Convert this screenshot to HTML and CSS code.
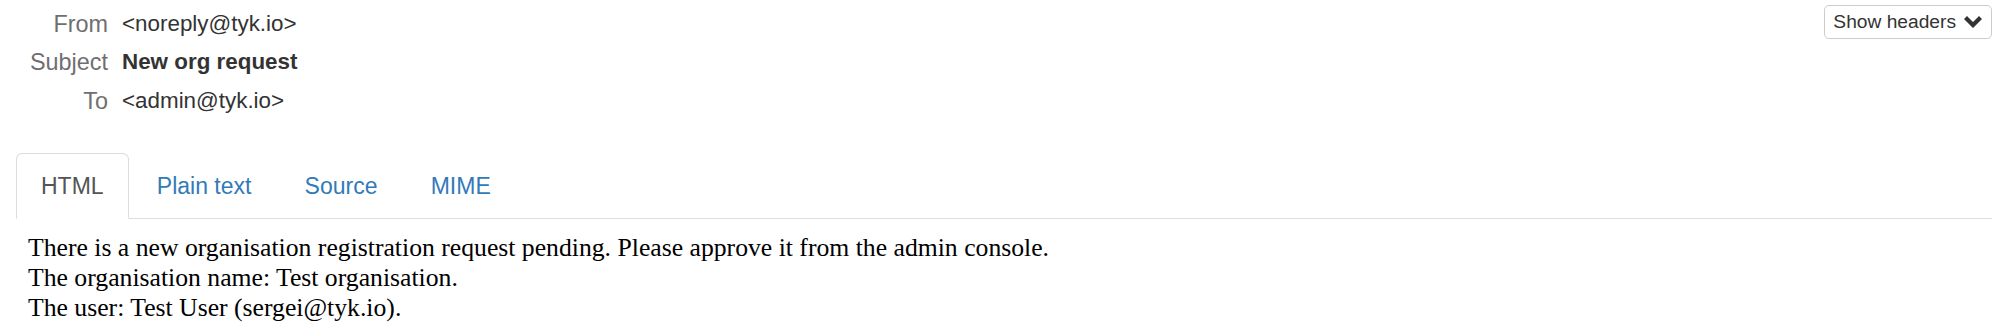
FILE: index.html
```html
<!DOCTYPE html>
<html>
<head>
<meta charset="utf-8">
<title>Message</title>
<link rel="stylesheet" href="styles.css">
</head>
<body>
<div class="message">
  <div class="header">
    <div class="meta">
      <div class="label">From</div>
      <div class="value">&lt;noreply@tyk.io&gt;</div>
      <div class="label">Subject</div>
      <div class="value subject">New org request</div>
      <div class="label">To</div>
      <div class="value">&lt;admin@tyk.io&gt;</div>
    </div>
    <button class="btn" type="button"><span>Show headers</span><svg class="chev" viewBox="0 0 18 12" width="18" height="12" aria-hidden="true"><path d="M0 3 L3 0 L9 6 L15 0 L18 3 L9 12 Z" fill="#333"/></svg></button>
  </div>
  <ul class="tabs">
    <li class="tab active"><a>HTML</a></li>
    <li class="tab"><a>Plain text</a></li>
    <li class="tab"><a>Source</a></li>
    <li class="tab"><a>MIME</a></li>
  </ul>
  <div class="body">
    There is a new organisation registration request pending. Please approve it from the admin console.<br>
    The organisation name: Test organisation.<br>
    The user: Test User (sergei@tyk.io).
  </div>
</div>
</body>
</html>
```
FILE: styles.css
```css
html, body {
  margin: 0;
  padding: 0;
  background: #fff;
}

body {
  font-family: "Liberation Sans", Arial, sans-serif;
  font-size: 22.4px;
  color: #333;
}

.message {
  padding: 5px 8px 0 16px;
}

.header {
  display: flex;
  justify-content: space-between;
  align-items: flex-start;
}

.meta {
  display: grid;
  grid-template-columns: 92px auto;
  column-gap: 14px;
  row-gap: 6.4px;
  line-height: 32px;
  margin-top: 3px;
}

.label {
  text-align: right;
  color: #6f6f6f;
  font-size: 23.4px;
}

.value {
  color: #333;
}

.subject {
  font-weight: bold;
}

.btn {
  display: flex;
  align-items: center;
  gap: 8px;
  height: 34px;
  padding: 0 9px 0 8px;
  border: 1px solid #ccc;
  border-radius: 5px;
  background: #fff;
  color: #333;
  font-family: inherit;
  font-size: 19.2px;
  line-height: 28.8px;
}

.chev {
  display: block;
}

.tabs {
  list-style: none;
  margin: 36px 0 0 0;
  padding: 0;
  display: flex;
  border-bottom: 1px solid #ddd;
}

.tab {
  margin: 0 3.2px -1px 0;
}

.tab a {
  display: block;
  padding: 16px 24px;
  font-size: 23px;
  line-height: 32px;
  border: 1px solid transparent;
  border-radius: 6.4px 6.4px 0 0;
  color: #337ab7;
}

.tab.active a {
  color: #555;
  background: #fff;
  border-color: #ddd #ddd transparent #ddd;
}

.body {
  margin: 14px 0 0 12px;
  font-family: "Liberation Serif", "Times New Roman", serif;
  font-size: 25.7px;
  color: #000;
}
```
